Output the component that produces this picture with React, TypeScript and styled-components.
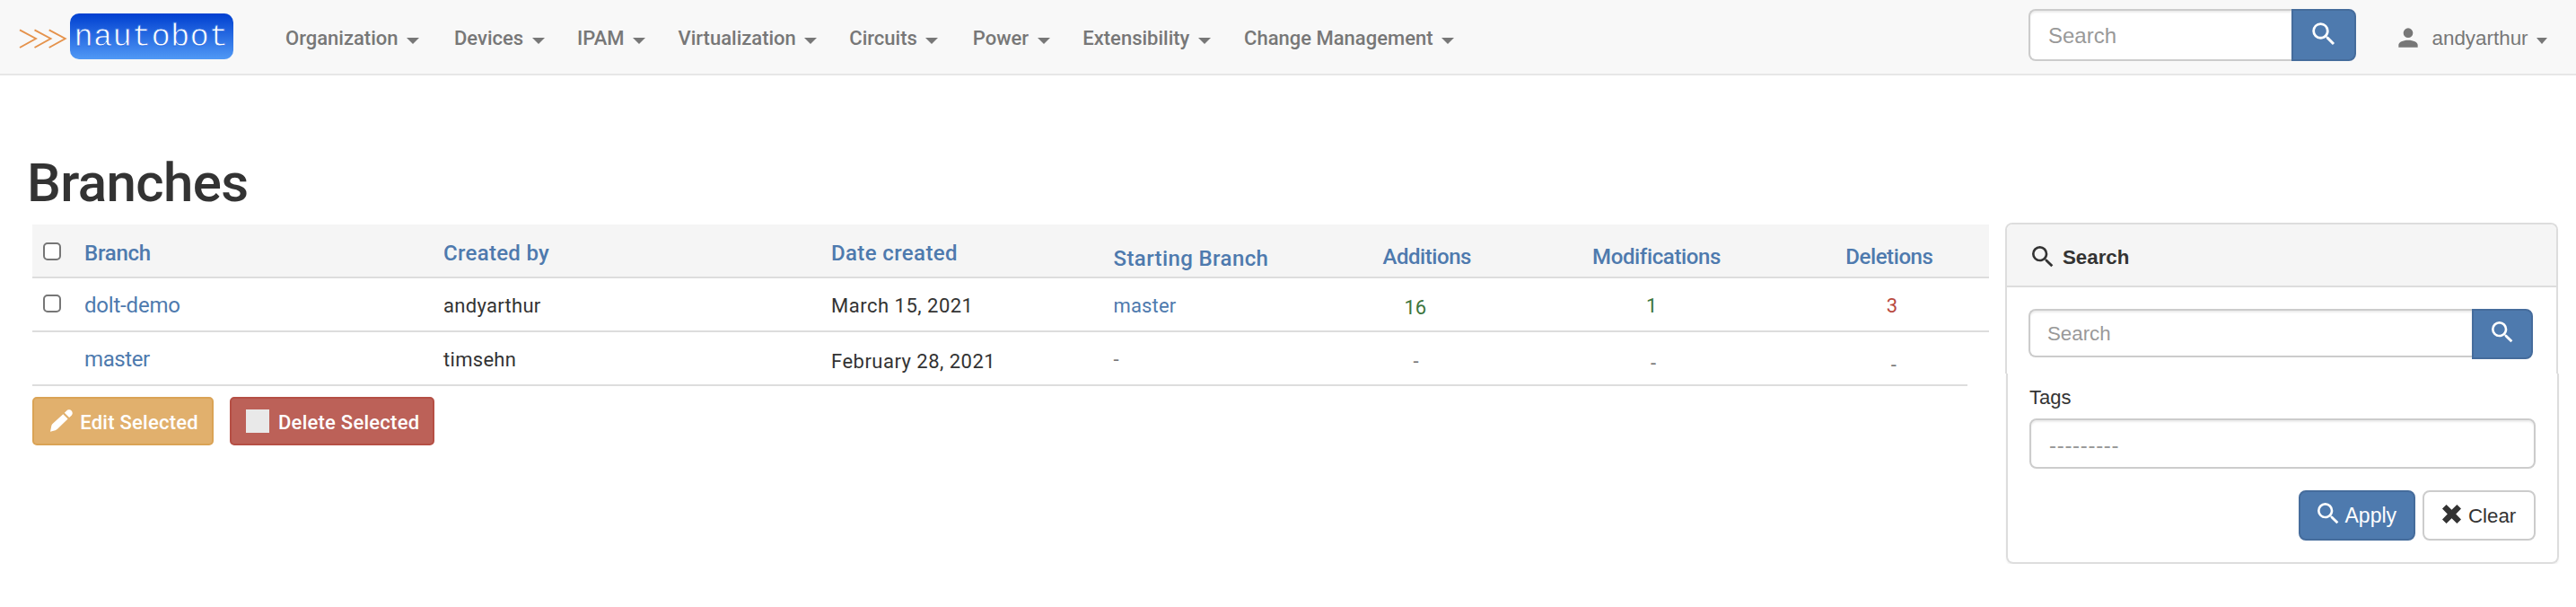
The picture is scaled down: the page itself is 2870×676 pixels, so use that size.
import React from 'react';
import styled, { createGlobalStyle, css } from 'styled-components';

const GlobalStyle = createGlobalStyle`
  *, *::before, *::after { box-sizing: border-box; }
  body {
    margin: 0;
    background: #fff;
    color: #333;
    font-family: Roboto, "Liberation Sans", sans-serif;
    font-size: 22px;
  }
`;

const helvetica = css`
  font-family: "Liberation Sans", Arial, sans-serif;
`;

/* ---------- navigation bar ---------- */

const Navbar = styled.header`
  display: flex;
  align-items: flex-start;
  height: 84px;
  background: #f8f8f8;
  border-bottom: 2px solid #e7e7e7;
`;

const Brand = styled.a`
  display: flex;
  align-items: center;
  width: 318px;
  padding: 15px 0 0 21px;
`;

const Prompt = styled.svg`
  width: 57px;
  height: 51px;
  fill: none;
  stroke: #e5924b;
  stroke-width: 1.9;
`;

const BrandName = styled.span`
  width: 182px;
  height: 51px;
  padding-left: 4.5px;
  border-radius: 10px;
  background: linear-gradient(#003fd0, #5099f5);
  color: #fff;
  font: 35.5px/53px "Liberation Mono", monospace;
  letter-spacing: 0.2px;
  -webkit-text-stroke: 0.8px #2c6fe2;
`;

const Menu = styled.nav`
  display: grid;
  grid-template-columns: 188px 137px 112.5px 190.8px 137.5px 122.5px 179.8px 300px;
  color: #777;
  font-weight: 500;
  line-height: 85px;
`;

const MenuItem = styled.a`
  display: flex;
`;

const Caret = styled.i<{ $small?: boolean }>`
  width: 0;
  height: 0;
  margin: 41.5px 0 0 ${p => (p.$small ? 9.5 : 9.6)}px;
  border: solid transparent;
  border-width: 7px ${p => (p.$small ? 6 : 7)}px 0;
  border-top-color: #777;
`;

const NavSearch = styled.form`
  display: flex;
  width: 365px;
  height: 58px;
  margin: 10px 0 0 auto;
`;

const UserMenu = styled.a`
  display: flex;
  width: 245px;
  padding-left: 42px;
  color: #777;
  line-height: 86px;
  ${helvetica}
  font-size: 22.4px;
`;

const UserIcon = styled.svg`
  width: 32px;
  height: 32px;
  margin: 26px 10.5px 0 0;
  fill: currentColor;
`;

/* ---------- form parts ---------- */

const SearchInput = styled.input<{ $large?: boolean }>`
  flex: 1;
  min-width: 0;
  height: ${p => (p.$large ? 58 : 54)}px;
  padding: ${p => (p.$large ? '2px 0 0 20px' : '2px 0 0 19px')};
  border: 2px solid #ccc;
  border-right: 0;
  border-radius: 8px 0 0 8px;
  background: #fff;
  box-shadow: inset 0 2px 2px rgba(0, 0, 0, 0.075);
  outline: 0;
  ${helvetica}
  font-size: ${p => (p.$large ? 24 : 22.3)}px;
  &::placeholder { color: #999; opacity: 1; }
`;

const SearchButton = styled.button<{ $large?: boolean }>`
  display: flex;
  justify-content: center;
  width: ${p => (p.$large ? 72 : 68)}px;
  padding: ${p => (p.$large ? 9 : 8)}px 0 0 0;
  border: 2px solid #456c9c;
  border-radius: 0 8px 8px 0;
  background: #4e7aae;
  color: #fff;
`;

const Icon = styled.svg<{ $size: number }>`
  flex: none;
  width: ${p => p.$size}px;
  height: ${p => p.$size}px;
  fill: currentColor;
`;

const Magnify = ({ size }: { size: number }) => (
  <Icon $size={size} viewBox="0 0 24 24">
    <path d="M9.5,3A6.5,6.5 0 0,1 16,9.5C16,11.11 15.41,12.59 14.44,13.73L14.71,14L15.5,14L20.5,19L19,20.5L14,15.5V14.71L13.73,14.44C12.59,15.41 11.11,16 9.5,16A6.5,6.5 0 0,1 3,9.5A6.5,6.5 0 0,1 9.5,3M9.5,5C7,5 5,7 5,9.5C5,12 7,14 9.5,14C12,14 14,12 14,9.5C14,7 12,5 9.5,5Z" />
  </Icon>
);

/* ---------- page body ---------- */

const Title = styled.h1`
  height: 164px;
  margin: 0;
  padding: 80px 0 0 30px;
  font-size: 60px;
  font-weight: 500;
  line-height: 80px;
  letter-spacing: -0.6px;
`;

const Columns = styled.main`
  display: flex;
  align-items: flex-start;
`;

const Content = styled.section`
  width: 2180px;
  margin: 2px 18px 0 36px;
`;

const Row = styled.div<{ $head?: boolean; $width?: number }>`
  display: grid;
  grid-template-columns: 58px 400px 432px 314.5px 300px 233.5px 282.3px 1fr;
  width: ${p => (p.$width ? `${p.$width}px` : '100%')};
  height: 60px;
  border-bottom: 2px solid #ddd;
  background: ${p => (p.$head ? '#f5f5f5' : '#fff')};
`;

type CellProps = { $drop?: number; $indent?: number; $track?: number; $tone?: string };

const Cell = styled.div<CellProps>`
  height: 58px;
  padding: ${p => p.$drop ?? 2}px 0 0 ${p => p.$indent ?? 0}px;
  color: ${p => p.$tone ?? '#333'};
  line-height: 58px;
  letter-spacing: ${p => p.$track ?? 0}px;
  white-space: nowrap;
`;

const HeadCell = styled(Cell)`
  color: #4e7aae;
  font-size: 24px;
  font-weight: 500;
`;

const BranchLink = styled(Cell)`
  padding-top: 1px;
  color: #4e7aae;
  font-size: 24px;
`;

const Checkbox = styled.input.attrs({ type: 'checkbox' })<{ $top: number }>`
  appearance: none;
  display: block;
  width: 20px;
  height: 20px;
  margin: ${p => p.$top}px 0 0 12px;
  border: 2px solid #767676;
  border-radius: 5px;
  background: #fff;
`;

const Actions = styled.div`
  display: flex;
  gap: 18px;
  margin-top: 12px;
`;

const ActionButton = styled.button<{ $danger?: boolean }>`
  display: flex;
  width: ${p => (p.$danger ? 228 : 202)}px;
  height: 54px;
  padding: 0 0 0 16px;
  border: 2px solid ${p => (p.$danger ? '#b54f45' : '#daa355')};
  border-radius: 5px;
  background: ${p => (p.$danger ? '#bc6158' : '#e1b06d')};
  color: #fff;
  font: 500 22px/54px Roboto, sans-serif;
  letter-spacing: 0.25px;
  white-space: nowrap;
`;

const Pencil = styled.svg`
  width: 25px;
  height: 25px;
  margin: 12px 8.7px 0 1.5px;
  fill: #fff;
`;

const Swatch = styled.span`
  width: 26px;
  height: 26px;
  margin: 12px 10px 0 0;
  background: #e9e9e9;
`;

/* ---------- filter panel ---------- */

const Panel = styled.aside`
  width: 617px;
  ${helvetica}
`;

const PanelTop = styled.div`
  width: 616px;
  height: 168px;
  border: 2px solid #ddd;
  border-bottom: 0;
  border-radius: 8px 8px 0 0;
`;

const PanelHeading = styled.div`
  display: flex;
  height: 70px;
  padding: 20px 0 0 23.5px;
  border-bottom: 2px solid #ddd;
  border-radius: 6px 6px 0 0;
  background: #f5f5f5;
  font-size: 22.3px;
  font-weight: 700;
  line-height: 34px;
`;

const PanelTitle = styled.span`
  margin: 0 0 0 6.5px;
`;

const PanelSearch = styled.form`
  display: flex;
  width: 562px;
  height: 56px;
  margin: 24px 0 0 24px;
`;

const PanelBottom = styled.div`
  width: 616px;
  height: 212px;
  margin-left: 1px;
  padding: 10px 24px 0;
  border: 2px solid #ddd;
  border-top: 0;
  border-radius: 0 0 8px 8px;
  box-shadow: 0 2px 2px rgba(0, 0, 0, 0.05);
`;

const Label = styled.label`
  display: block;
  height: 40px;
  line-height: 34px;
`;

const Select = styled.div`
  height: 56px;
  padding: 2px 0 0 20px;
  border: 2px solid #ccc;
  border-radius: 8px;
  box-shadow: inset 0 2px 2px rgba(0, 0, 0, 0.075);
  color: #999;
  font-size: 24px;
  line-height: 52px;
  letter-spacing: 0.7px;
`;

const PanelActions = styled.div`
  display: flex;
  justify-content: flex-end;
  gap: 8px;
  margin-top: 24px;
`;

const PanelButton = styled.button<{ $primary?: boolean }>`
  display: flex;
  width: ${p => (p.$primary ? 130 : 126)}px;
  height: 56px;
  padding: 0 0 0 ${p => (p.$primary ? 15 : 20)}px;
  border: 2px solid ${p => (p.$primary ? '#456c9c' : '#ccc')};
  border-radius: 8px;
  background: ${p => (p.$primary ? '#4e7aae' : '#fff')};
  color: ${p => (p.$primary ? '#fff' : '#333')};
  ${helvetica}
  font-size: ${p => (p.$primary ? 23 : 22.3)}px;
  line-height: 53px;
`;

const IconSlot = styled.span<{ $top: number; $gap: number }>`
  display: flex;
  margin: ${p => p.$top}px ${p => p.$gap}px 0 0;
`;

const menu = [
  'Organization', 'Devices', 'IPAM', 'Virtualization',
  'Circuits', 'Power', 'Extensibility', 'Change Management',
];

const heads: { label: string; drop: number; track: number }[] = [
  { label: 'Branch', drop: 3, track: -0.25 },
  { label: 'Created by', drop: 3, track: 0.29 },
  { label: 'Date created', drop: 3, track: 0.38 },
  { label: 'Starting Branch', drop: 9, track: 0.39 },
  { label: 'Additions', drop: 7, track: -0.45 },
  { label: 'Modifications', drop: 7, track: -0.36 },
  { label: 'Deletions', drop: 7, track: -0.42 },
];

export default function App() {
  return (
    <>
      <GlobalStyle />
      <Navbar>
        <Brand>
          <Prompt viewBox="0 0 57 51">
            <path d="M1 18.3L19 28L1 38M17.5 18.3L35.5 28L17.5 38M33.7 18.3L51.7 28L33.7 38" />
          </Prompt>
          <BrandName>nautobot</BrandName>
        </Brand>
        <Menu>
          {menu.map(label => (
            <MenuItem key={label}>{label}<Caret /></MenuItem>
          ))}
        </Menu>
        <NavSearch>
          <SearchInput $large placeholder="Search" />
          <SearchButton $large type="button"><Magnify size={34} /></SearchButton>
        </NavSearch>
        <UserMenu>
          <UserIcon viewBox="0 0 24 24">
            <path d="M12,4A4,4 0 0,1 16,8A4,4 0 0,1 12,12A4,4 0 0,1 8,8A4,4 0 0,1 12,4M12,14C16.42,14 20,15.79 20,18V20H4V18C4,15.79 7.58,14 12,14Z" />
          </UserIcon>
          andyarthur<Caret $small />
        </UserMenu>
      </Navbar>

      <Title>Branches</Title>

      <Columns>
        <Content>
          <Row $head>
            <Checkbox $top={20} />
            {heads.map(h => (
              <HeadCell key={h.label} $drop={h.drop} $track={h.track}>{h.label}</HeadCell>
            ))}
          </Row>
          <Row>
            <Checkbox $top={18} />
            <BranchLink $track={-0.2}>dolt-demo</BranchLink>
            <Cell $track={0.3}>andyarthur</Cell>
            <Cell $track={0.5}>March 15, 2021</Cell>
            <Cell $track={0.15} $tone="#4e7aae">master</Cell>
            <Cell $drop={4} $indent={24} $tone="#3c763d">16</Cell>
            <Cell $indent={60} $tone="#3c763d">1</Cell>
            <Cell $indent={45.5} $tone="#b94a3f">3</Cell>
          </Row>
          <Row $width={2156}>
            <span />
            <BranchLink $track={-0.4}>master</BranchLink>
            <Cell $track={0.3}>timsehn</Cell>
            <Cell $drop={4} $track={0.48}>February 28, 2021</Cell>
            <Cell $tone="#777">-</Cell>
            <Cell $drop={4} $indent={34} $tone="#777">-</Cell>
            <Cell $drop={6} $indent={65} $tone="#777">-</Cell>
            <Cell $drop={8} $indent={50.5} $tone="#777">-</Cell>
          </Row>
          <Actions>
            <ActionButton>
              <Pencil viewBox="0 0 25 25">
                <path d="M0 24.8L1.3 18.2Q1.6 17 2.5 16.1L14.3 5.2L19.6 10.5L8 21.8Q7 22.8 5.7 23.2Z" />
                <path d="M15.8 3.7L17.9 1.7C20 -.5 22.5 .3 23.7 1.5C25 2.8 25.3 5 23.4 7L21.1 9.1Z" />
              </Pencil>
              Edit Selected
            </ActionButton>
            <ActionButton $danger>
              <Swatch />
              Delete Selected
            </ActionButton>
          </Actions>
        </Content>

        <Panel>
          <PanelTop>
            <PanelHeading>
              <Magnify size={32} />
              <PanelTitle>Search</PanelTitle>
            </PanelHeading>
            <PanelSearch>
              <SearchInput placeholder="Search" />
              <SearchButton type="button"><Magnify size={32} /></SearchButton>
            </PanelSearch>
          </PanelTop>
          <PanelBottom>
            <Label>Tags</Label>
            <Select>---------</Select>
            <PanelActions>
              <PanelButton $primary>
                <IconSlot $top={8} $gap={2.5}><Magnify size={32} /></IconSlot>
                Apply
              </PanelButton>
              <PanelButton>
                <IconSlot $top={13.5} $gap={8}>
                  <Icon $size={21} viewBox="0 0 21 21">
                    <path d="M4.6 0L10.5 5.7L16.4 0L21 4.6L15.2 10.5L21 16.4L16.4 21L10.5 15.3L4.6 21L0 16.4L5.8 10.5L0 4.6Z" />
                  </Icon>
                </IconSlot>
                Clear
              </PanelButton>
            </PanelActions>
          </PanelBottom>
        </Panel>
      </Columns>
    </>
  );
}
